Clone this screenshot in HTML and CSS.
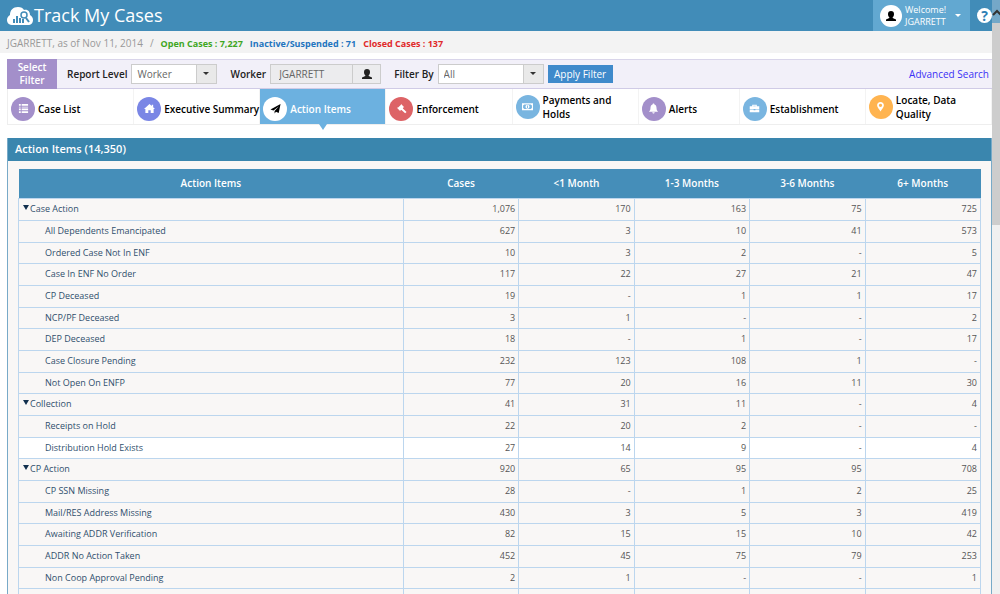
FILE: index.html
```html
<!DOCTYPE html>
<html lang="en">
<head>
    <meta charset="UTF-8">
    <meta name="viewport" content="width=device-width, initial-scale=1.0">
    <title>Track My Cases</title>
    <link rel="stylesheet" href="styles.css">
</head>
<body>
    <div class="page">
        <header class="topbar">
            <svg class="logo" viewBox="0 0 26 20">
                <path fill="#fff" d="M6 19C2 19 0 17 0 14c0-2 1-4 3-5 0-5 3-8 8-8 3 0 5 1 6 3 4-1 6 2 6 5 2 1 3 3 3 5 0 3-2 5-5 5z"/>
                <path fill="#418cb8" d="M6 13h2v4H6zM9 10h2v7H9zM12 12h2v5h-2zM15 13h2v4h-2z"/>
                <circle cx="17" cy="9" r="3" fill="#fff" stroke="#418cb8" stroke-width="1.5"/>
                <path d="M19 12l3 4" stroke="#418cb8" stroke-width="2"/>
            </svg>
            <h1>Track My Cases</h1>
            <button class="user">
                <span class="avatar">
                    <svg viewBox="0 0 12 12"><path d="M6 1c2 0 3 1 3 3 0 1.500-.5 2.500-1.300 3.300V8L11 9.500V11H1V9.500L4.300 8v-.7C3.500 6.500 3 5.500 3 4c0-2 1-3 3-3z"/></svg>
                </span>
                <span class="user-name">Welcome!<br>JGARRETT</span>
                <span class="caret"></span>
            </button>
            <button class="help">?</button>
        </header>

        <div class="status">
            <span>JGARRETT, as of Nov 11, 2014</span>
            <span class="slash">/</span>
            <b class="open">Open Cases : 7,227</b>
            <b class="inactive">Inactive/Suspended : 71</b>
            <b class="closed">Closed Cases : 137</b>
        </div>

        <main>
            <form class="filter">
                <div class="filter-title">Select Filter</div>
                <label for="level">Report Level</label>
                <span class="select level">
                    <select id="level"><option>Worker</option></select>
                </span>
                <label for="worker">Worker</label>
                <span class="lookup">
                    <input type="text" id="worker" value="JGARRETT" readonly>
                    <button type="button" aria-label="Find worker">
                        <svg viewBox="0 0 12 12"><path d="M6 1c2 0 3 1 3 3 0 1.500-.5 2.500-1.300 3.300V8L11 9.500V11H1V9.500L4.300 8v-.7C3.500 6.500 3 5.500 3 4c0-2 1-3 3-3z"/></svg>
                    </button>
                </span>
                <label for="by">Filter By</label>
                <span class="select by">
                    <select id="by"><option>All</option></select>
                </span>
                <button type="button" class="apply">Apply Filter</button>
                <a class="advanced" href="#">Advanced Search</a>
            </form>

            <nav class="tabs">
                <a href="#">
                    <span class="icon purple"><svg viewBox="0 0 12 12"><path d="M1 1h2v2H1zM4 1h7v2H4zM1 4h2v1H1zM4 4h7v1H4zM1 6h2v2H1zM4 6h7v2H4zM1 9h2v2H1zM4 9h7v2H4z"/></svg></span>
                    Case List
                </a>
                <a href="#">
                    <span class="icon indigo"><svg viewBox="0 0 12 12"><path d="M6 1l2.500 2.300V2H10v2.700L12 6.500h-1.500V11H7.300V8H4.700v3H1.500V6.500H0z"/></svg></span>
                    Executive Summary
                </a>
                <a href="#" class="active">
                    <span class="icon white"><svg viewBox="0 0 12 12"><path d="M11.500 1L9.500 11 6.500 9.500 5 11.500V8.800L9.800 3.500 3.800 8.300.5 7z"/></svg></span>
                    Action Items
                </a>
                <a href="#">
                    <span class="icon red"><svg viewBox="0 0 12 12"><path d="M5.500 1l3.500 3.500-1.200.3L7.500 6 11.500 9.800 10 11.300 6 7.500l-1 .2-.3 1.300L1 5.300l1.300-.3L5.200 2.200z"/></svg></span>
                    Enforcement
                </a>
                <a href="#" class="two-line">
                    <span class="icon sky"><svg viewBox="0 0 12 12"><path fill-rule="evenodd" d="M0 2.500h12v7.500H0zM2.500 3.700L1.200 5v2.500l1.300 1.300h7l1.300-1.300V5L9.500 3.700z"/><circle cx="6" cy="6.200" r="2.200"/><path class="cut" d="M5.500 5h1v2.500h-1z"/></svg></span>
                    Payments and Holds
                </a>
                <a href="#">
                    <span class="icon purple"><svg viewBox="0 0 12 12"><path d="M6 .5c.7 0 1 .5 1 1 1.700.5 2.300 2 2.300 4C9.300 7.500 10 8.500 11 9.500H1c1-1 1.700-2 1.700-4 0-2 .6-3.500 2.300-4 0-.5.3-1 1-1zM4.700 10h2.600c0 2-2.600 2-2.600 0z"/></svg></span>
                    Alerts
                </a>
                <a href="#">
                    <span class="icon sky"><svg viewBox="0 0 12 12"><path fill-rule="evenodd" d="M3.500 2h5v1.500h2.700v3H.8v-3h2.700zM4.700 3v.5h2.600V3zM.8 7.200H5V8h2v-.8h4.200V10H.8z"/></svg></span>
                    Establishment
                </a>
                <a href="#" class="two-line">
                    <span class="icon orange"><svg viewBox="0 0 12 12"><path fill-rule="evenodd" d="M6 1c2.300 0 3.700 1.600 3.700 3.600C9.700 7 7.500 8.500 6 11.500 4.500 8.500 2.300 7 2.300 4.600 2.300 2.600 3.700 1 6 1zm0 1.900a1.800 1.800 0 1 0 0 3.600 1.800 1.800 0 0 0 0-3.600z"/></svg></span>
                    Locate, Data Quality
                </a>
            </nav>

            <section class="panel">
                <h2>Action Items (14,350)</h2>
                <table>
                    <thead>
                        <tr><th class="name">Action Items</th><th>Cases</th><th>&lt;1 Month</th><th>1-3 Months</th><th>3-6 Months</th><th>6+ Months</th></tr>
                    </thead>
                    <tbody>
                        <tr class="group"><td>Case Action</td><td>1,076</td><td>170</td><td>163</td><td>75</td><td>725</td></tr>
                        <tr><td>All Dependents Emancipated</td><td>627</td><td>3</td><td>10</td><td>41</td><td>573</td></tr>
                        <tr><td>Ordered Case Not In ENF</td><td>10</td><td>3</td><td>2</td><td>-</td><td>5</td></tr>
                        <tr><td>Case In ENF No Order</td><td>117</td><td>22</td><td>27</td><td>21</td><td>47</td></tr>
                        <tr><td>CP Deceased</td><td>19</td><td>-</td><td>1</td><td>1</td><td>17</td></tr>
                        <tr><td>NCP/PF Deceased</td><td>3</td><td>1</td><td>-</td><td>-</td><td>2</td></tr>
                        <tr><td>DEP Deceased</td><td>18</td><td>-</td><td>1</td><td>-</td><td>17</td></tr>
                        <tr><td>Case Closure Pending</td><td>232</td><td>123</td><td>108</td><td>1</td><td>-</td></tr>
                        <tr><td>Not Open On ENFP</td><td>77</td><td>20</td><td>16</td><td>11</td><td>30</td></tr>
                        <tr class="group"><td>Collection</td><td>41</td><td>31</td><td>11</td><td>-</td><td>4</td></tr>
                        <tr><td>Receipts on Hold</td><td>22</td><td>20</td><td>2</td><td>-</td><td>-</td></tr>
                        <tr class="hover"><td>Distribution Hold Exists</td><td>27</td><td>14</td><td>9</td><td>-</td><td>4</td></tr>
                        <tr class="group"><td>CP Action</td><td>920</td><td>65</td><td>95</td><td>95</td><td>708</td></tr>
                        <tr><td>CP SSN Missing</td><td>28</td><td>-</td><td>1</td><td>2</td><td>25</td></tr>
                        <tr><td>Mail/RES Address Missing</td><td>430</td><td>3</td><td>5</td><td>3</td><td>419</td></tr>
                        <tr><td>Awaiting ADDR Verification</td><td>82</td><td>15</td><td>15</td><td>10</td><td>42</td></tr>
                        <tr><td>ADDR No Action Taken</td><td>452</td><td>45</td><td>75</td><td>79</td><td>253</td></tr>
                        <tr><td>Non Coop Approval Pending</td><td>2</td><td>1</td><td>-</td><td>-</td><td>1</td></tr>
                        <tr><td></td><td></td><td></td><td></td><td></td><td></td></tr>
                    </tbody>
                </table>
            </section>
        </main>
    </div>

    <div class="scrollbar">
        <div class="scroll-up"><svg viewBox="0 0 9 9"><path d="M1 7l4-4 4 4" fill="none" stroke="#333" stroke-width="2"/></svg></div>
        <div class="thumb"></div>
    </div>
</body>
</html>
```

FILE: styles.css
```css
* {
    box-sizing: border-box;
}

body {
    margin: 0;
    height: 100vh;
    overflow: hidden;
    display: flex;
    font-family: "Open Sans", sans-serif;
    font-size: 10px;
    background: #fff;
    color: #555;
}

button, input, select {
    font-family: inherit;
    font-size: inherit;
    border-radius: 0;
    margin: 0;
    padding: 0;
}

.page {
    flex: 1;
    min-width: 0;
}

/* top bar */
.topbar {
    height: 31px;
    display: flex;
    align-items: center;
    background: #418cb8;
    color: #fff;
    padding-left: 7px;
}

.logo {
    width: 26px;
    height: 20px;
    margin-right: 1px;
}

h1 {
    margin: 0;
    font-size: 18px;
    font-weight: 400;
    line-height: 22px;
    padding-bottom: 2px;
}

.user {
    margin-left: auto;
    width: 97px;
    height: 31px;
    border: none;
    background: #62a8d1;
    color: #fff;
    display: flex;
    align-items: center;
    padding: 0 9px 0 7px;
    text-align: left;
}

.avatar {
    width: 22px;
    height: 22px;
    border-radius: 50%;
    background: #fff;
    display: flex;
    align-items: center;
    justify-content: center;
    margin-right: 3px;
}

.avatar svg {
    width: 12px;
    height: 12px;
}

.user-name {
    font-size: 9px;
    line-height: 12px;
}

.caret {
    margin-left: auto;
    border: 3px solid transparent;
    border-top-color: #fff;
    border-bottom: none;
}

.help {
    width: 15px;
    height: 15px;
    margin: 0 0 0 7px;
    border: none;
    border-radius: 50%;
    background: #fff;
    color: #2f80b5;
    font-size: 14px;
    font-weight: 700;
    line-height: 15px;
}

/* case counts */
.status {
    height: 22px;
    line-height: 25px;
    padding-left: 7px;
    display: flex;
    background: #f3f3f3;
    color: #999;
}

.status b {
    font-size: 9px;
    margin-right: 7px;
}

.slash {
    margin: 0 7px;
}

.open {
    color: #3fa71f;
}

.inactive {
    color: #1f75bf;
}

.closed {
    color: #e02a2a;
}

main {
    padding: 6px 0 0 7px;
}

/* filter row */
.filter {
    height: 30px;
    display: flex;
    align-items: center;
    background: #f2f0f9;
    border-top: 1px solid #d9d5ea;
    border-bottom: 1px solid #d0cbe6;
}

.filter-title {
    width: 50px;
    height: 30px;
    padding: 2px 8px 0;
    background: #a38fca;
    color: #fff;
    font-weight: 600;
    line-height: 13px;
    text-align: center;
    flex: none;
}

.filter label {
    color: #222;
    font-weight: 600;
    margin-left: 13px;
    margin-right: 4px;
}

.filter label:first-of-type {
    margin-left: 10px;
}

.select {
    position: relative;
    height: 20px;
}

.select select {
    width: 100%;
    height: 20px;
    padding-left: 5px;
    appearance: none;
    border: 1px solid #ccc;
    background: linear-gradient(#ccc, #ccc) right 19px top / 1px 100% no-repeat,
                linear-gradient(#e9e9e9, #e9e9e9) right / 19px 100% no-repeat #fff;
    color: #666;
}

.select::after {
    content: "";
    position: absolute;
    right: 8px;
    top: 8px;
    border: 3px solid transparent;
    border-top-color: #333;
    border-bottom: none;
}

.level {
    width: 86px;
}

.by {
    width: 106px;
}

.lookup {
    display: flex;
    width: 111px;
    height: 20px;
}

.lookup input {
    flex: 1;
    min-width: 0;
    padding-left: 8px;
    border: 1px solid #ccc;
    background: #ececee;
    color: #666;
}

.lookup button {
    width: 28px;
    border: 1px solid #ccc;
    border-left: none;
    background: #ececee;
    display: flex;
    align-items: center;
    justify-content: center;
}

.lookup svg {
    width: 12px;
    height: 12px;
    fill: #222;
}

.apply {
    width: 65px;
    height: 18px;
    margin-left: 4px;
    border: none;
    background: #3f8acb;
    color: #fff;
}

.advanced {
    margin-left: auto;
    margin-right: 3px;
    color: #3a30f5;
    text-decoration: none;
}

/* tabs */
.tabs {
    display: grid;
    grid-template-columns: repeat(5, 5fr) 4fr 5fr 5fr;
    height: 36px;
    border-left: 1px solid #eee;
    border-bottom: 1px solid #eee;
}

.tabs a {
    min-width: 0;
    display: flex;
    align-items: center;
    gap: 3px;
    padding: 4px 0 0 3px;
    color: #000;
    font-weight: 600;
    line-height: 14px;
    text-decoration: none;
    white-space: nowrap;
    border-right: 1px solid #f3f3f3;
}

.tabs a.two-line {
    white-space: normal;
    padding-top: 0;
    padding-right: 20px;
}

.tabs a.active {
    position: relative;
    background: #6cb1e0;
    color: #fff;
}

.tabs a.active::after {
    content: "";
    position: absolute;
    top: 100%;
    left: 50%;
    margin-left: -4px;
    border: 4px solid transparent;
    border-top: 6px solid #6cb1e0;
    border-bottom: none;
}

.icon {
    width: 24px;
    height: 24px;
    border-radius: 50%;
    display: flex;
    align-items: center;
    justify-content: center;
    flex: none;
    fill: #fff;
}

.icon svg {
    width: 11px;
    height: 11px;
}

.purple { background: #a38fca; }
.indigo { background: #7a86e5; }
.red { background: #dd6366; }
.sky { background: #79b5e0; }
.orange { background: #ffb450; }
.white { background: #fff; fill: #000; }
.cut { fill: #79b5e0; }

/* results */
.panel {
    margin-top: 13px;
    padding-bottom: 10px;
    border: 1px solid #78aac8;
    border-top: none;
    background: #f9f7f6;
}

h2 {
    margin: 0 0 8px;
    height: 23px;
    padding-left: 7px;
    background: #3a86ae;
    color: #fff;
    font-size: 11px;
    font-weight: 600;
    line-height: 21px;
}

table {
    width: calc(100% - 20px);
    margin-left: 10px;
    table-layout: fixed;
    border-collapse: collapse;
}

th {
    height: 29px;
    width: 12%;
    padding: 0;
    background: #458eb9;
    color: #fff;
    font-weight: 600;
}

th.name {
    width: 40%;
}

td {
    height: 22px;
    padding: 0 3px;
    font-size: 9px;
    line-height: 14px;
    text-align: right;
    border: 1px solid #bcd6ee;
}

tr:nth-child(3n) td {
    height: 21px;
}

td:first-child {
    padding-left: 26px;
    text-align: left;
    color: #304f6d;
}

.group td:first-child {
    padding-left: 4px;
}

.group td:first-child::before {
    content: "";
    display: inline-block;
    margin-right: 1px;
    vertical-align: 2px;
    border: 3px solid transparent;
    border-top: 5px solid #12304f;
    border-bottom: none;
}

.hover {
    background: #fff;
}

/* scrollbar */
.scrollbar {
    width: 8px;
    background: #f0f0f0;
    flex: none;
}

.scroll-up {
    height: 23px;
    padding-top: 8px;
    background: #74a8c8;
}

.scroll-up svg {
    display: block;
    width: 9px;
    height: 9px;
}

.thumb {
    height: 34%;
    background: #cdcdcd;
}
```
